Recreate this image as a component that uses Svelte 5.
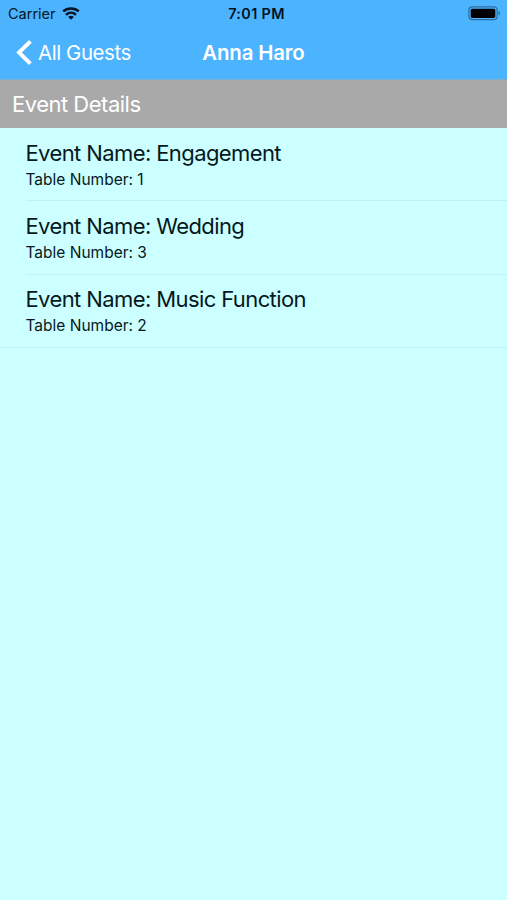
<script>
	const guest = 'Anna Haro';

	const events = [
		{ name: 'Engagement', table: 1 },
		{ name: 'Wedding', table: 3 },
		{ name: 'Music Function', table: 2 }
	];
</script>

<div class="screen">
	<header>
		<div class="status-bar">
			<div class="carrier">
				<span class="carrier-name">Carrier</span>
				<svg class="wifi" width="18" height="13" viewBox="0 0 18 13">
					<g fill="none" stroke="#061521" stroke-width="2.5">
						<path d="M1.2 4.4 C5.6 0.4 12.4 0.4 16.8 4.4" />
						<path d="M4 7.8 C6.9 5 11.1 5 14 7.8" />
					</g>
					<path d="M6.2 9.9 C7.9 8.3 10.1 8.3 11.8 9.9 L9 12.8 Z" fill="#061521" />
				</svg>
			</div>
			<span class="time">7:01 PM</span>
			<svg class="battery" width="33" height="15" viewBox="0 0 33 15">
				<rect x="0.9" y="0.9" width="28.2" height="12.8" rx="3.4" fill="none" stroke="#2b6f9f" stroke-width="1.2" />
				<rect x="2.7" y="2.7" width="24.6" height="9.2" rx="1.6" fill="#000" />
				<path d="M30.5 5.1 C32.5 5.8 32.5 8.8 30.5 9.5 Z" fill="#2b6f9f" />
			</svg>
		</div>

		<nav>
			<button class="back">
				<svg width="17" height="27" viewBox="0 0 17 27">
					<path d="M14.4 2.3 L3 13.5 L14.4 24.7" fill="none" stroke="#fff" stroke-width="3.9" />
				</svg>
				<span class="back-label">All Guests</span>
			</button>
			<h1>{guest}</h1>
		</nav>
	</header>

	<h2>Event Details</h2>

	<ul>
		{#each events as event}
			<li>
				<div class="row">
					<span class="event-name">Event Name: {event.name}</span>
					<span class="table-number">Table Number: {event.table}</span>
				</div>
			</li>
		{/each}
	</ul>
</div>

<style>
	:global(body) {
		margin: 0;
	}

	.screen {
		width: 507px;
		height: 900px;
		overflow: hidden;
		background: #ccffff;
		font-family: Inter, 'Liberation Sans', sans-serif;
		color: #06181d;
	}

	header {
		box-sizing: border-box;
		height: 80px;
		background: #4cb3ff;
		border-bottom: 1px solid #7faecd;
	}

	.status-bar {
		display: grid;
		grid-template-columns: 1fr auto 1fr;
		align-items: center;
		box-sizing: border-box;
		height: 25px;
		padding: 2px 6px 0 12px;
	}

	.carrier {
		display: flex;
		align-items: center;
		gap: 6px;
		margin-left: -4px;
		font-size: 14.5px;
	}

	.wifi {
		margin-top: -1px;
	}

	.time {
		font-size: 14.4px;
		font-weight: 600;
		letter-spacing: 0.35px;
		color: #03121e;
	}

	.battery {
		justify-self: end;
		margin-top: -1px;
	}

	nav {
		display: grid;
		grid-template-columns: 1fr auto 1fr;
		align-items: center;
		height: 54px;
		color: #fff;
	}

	.back {
		display: flex;
		align-items: center;
		gap: 5px;
		padding: 0 0 0 16px;
		border: none;
		background: none;
		color: inherit;
		font-family: inherit;
		font-size: 20.4px;
		letter-spacing: -0.4px;
		cursor: pointer;
	}

	h1 {
		margin: 0;
		font-size: 20.4px;
		font-weight: 600;
		letter-spacing: -0.15px;
	}

	h2 {
		display: flex;
		align-items: center;
		height: 48px;
		margin: 0;
		padding-left: 12px;
		background: #a9a9a9;
		color: #fff;
		font-size: 22px;
		font-weight: 400;
		letter-spacing: -0.5px;
	}

	ul {
		margin: 0;
		padding: 0;
		list-style: none;
	}

	li {
		padding-left: 26px;
	}

	.row {
		display: flex;
		flex-direction: column;
		align-items: flex-start;
		box-sizing: border-box;
		height: 73.4px;
		padding-top: 11.6px;
		border-bottom: 1px solid #c2f1f3;
	}

	/* the last separator runs edge to edge */
	li:last-child {
		padding-left: 0;
	}

	li:last-child .row {
		padding-left: 26px;
	}

	.event-name {
		margin-left: -0.5px;
		font-size: 22px;
		line-height: 27px;
		letter-spacing: -0.6px;
	}

	.table-number {
		margin-left: -0.5px;
		font-size: 15.5px;
		line-height: 25px;
	}
</style>
